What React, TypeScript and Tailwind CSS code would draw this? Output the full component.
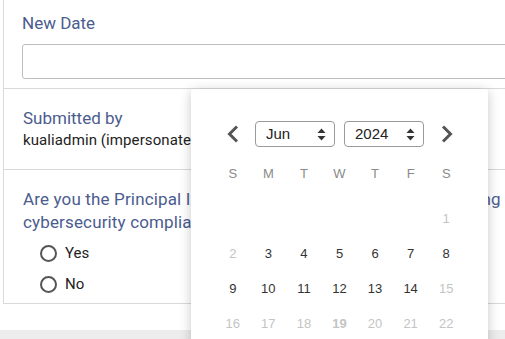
import React from 'react'

const labelCls = "text-[17px] leading-[24px] text-[#4b5c8e]"

const weeks: { n: number; muted?: boolean; bold?: boolean }[][] = [
  [{ n: 0 }, { n: 0 }, { n: 0 }, { n: 0 }, { n: 0 }, { n: 0 }, { n: 1, muted: true }],
  [
    { n: 2, muted: true },
    { n: 3 },
    { n: 4 },
    { n: 5 },
    { n: 6 },
    { n: 7 },
    { n: 8 },
  ],
  [
    { n: 9 },
    { n: 10 },
    { n: 11 },
    { n: 12 },
    { n: 13 },
    { n: 14 },
    { n: 15, muted: true },
  ],
  [
    { n: 16, muted: true },
    { n: 17, muted: true },
    { n: 18, muted: true },
    { n: 19, muted: true, bold: true },
    { n: 20, muted: true },
    { n: 21, muted: true },
    { n: 22, muted: true },
  ],
]

const SortIcon = () => (
  <svg width="9" height="13" viewBox="0 0 9 13" className="shrink-0">
    <path d="M4.5 0.5 L8.5 5 L0.5 5 Z" fill="#333" />
    <path d="M4.5 12.5 L8.5 8 L0.5 8 Z" fill="#333" />
  </svg>
)

const Chevron = ({ dir }: { dir: 'left' | 'right' }) => (
  <svg width="14" height="18" viewBox="0 0 14 18">
    <polyline
      points={dir === 'left' ? '11,1.5 3.5,9 11,16.5' : '3,1.5 10.5,9 3,16.5'}
      fill="none"
      stroke="#555"
      strokeWidth="3"
    />
  </svg>
)

const FakeSelect = ({ value }: { value: string }) => (
  <div className="flex h-[26px] w-[80px] items-center justify-between rounded-[4px] border border-[#9a9a9a] pl-[10px] pr-[8px] text-[15px] text-[#222]">
    <span>{value}</span>
    <SortIcon />
  </div>
)

const Radio = ({ label }: { label: string }) => (
  <label className="flex h-[31px] items-center gap-[8px] pl-[17px]">
    <span className="h-[17px] w-[17px] rounded-full border-2 border-[#555]" />
    <span className="text-[15px] text-[#222]">{label}</span>
  </label>
)

export default function App() {
  return (
    <div
      className="relative h-[339px] w-[505px] overflow-hidden bg-white"
      style={{ fontFamily: 'Roboto, "Liberation Sans", sans-serif' }}
    >
      <div className="ml-[3px] w-[560px] border-b border-l border-[#d9d9d9]">
        <div className="border-b border-[#d9d9d9] pb-[9px] pl-[18px] pt-[11px]">
          <div className={labelCls}>New Date</div>
          <div className="mt-[9px] h-[35px] w-[520px] rounded-[3px] border border-[#bdbdbd]" />
        </div>

        <div className="border-b border-[#d9d9d9] pb-[19px] pl-[19px] pt-[17px]">
          <div className={labelCls}>Submitted by</div>
          <div className="text-[15px] leading-[20px] tracking-[0.1px] text-[#222]">kualiadmin (impersonated by system)</div>
        </div>

        <div className="pb-[3px] pl-[19px] pt-[18px]">
          <p className="w-[500px] text-[17px] leading-[23px] tracking-[0.15px] text-[#4b5c8e]">
            Are you the Principal Investigator and responsible for ensuring cybersecurity compliance for this project?
          </p>
          <div className="mt-[4px]">
            <Radio label="Yes" />
            <Radio label="No" />
          </div>
        </div>
      </div>

      <div className="mt-[26px] h-[20px] bg-[#ededed]" />

      <div
        className="absolute left-[191px] top-[89px] h-[280px] w-[297px] rounded-t-[3px] bg-white px-[24px] pt-[30px] shadow-[0_2px_12px_rgba(0,0,0,0.22)]"
        style={{ fontFamily: '"Liberation Sans", Arial, sans-serif' }}
      >
        <div className="flex h-[30px] items-center justify-between">
          <div className="flex w-[35px] justify-center">
            <Chevron dir="left" />
          </div>
          <div className="flex gap-[9px]">
            <FakeSelect value="Jun" />
            <FakeSelect value="2024" />
          </div>
          <div className="flex w-[35px] justify-center">
            <Chevron dir="right" />
          </div>
        </div>

        <div className="mt-[8px] grid h-[34px] grid-cols-7 items-center text-center text-[13px] text-[#8a8a8a]">
          {['S', 'M', 'T', 'W', 'T', 'F', 'S'].map((d, i) => (
            <span key={i}>{d}</span>
          ))}
        </div>

        <div className="mt-[10px]">
          {weeks.map((w, wi) => (
            <div key={wi} className="grid h-[35px] grid-cols-7 items-center text-center text-[13px]">
              {w.map((d, di) => (
                <span
                  key={di}
                  className={
                    d.n === 0
                      ? ''
                      : d.muted
                      ? d.bold
                        ? 'font-bold text-[#c4c4c4]'
                        : 'text-[#c4c4c4]'
                      : 'text-[#333]'
                  }
                >
                  {d.n === 0 ? '' : d.n}
                </span>
              ))}
            </div>
          ))}
        </div>
      </div>
    </div>
  )
}
